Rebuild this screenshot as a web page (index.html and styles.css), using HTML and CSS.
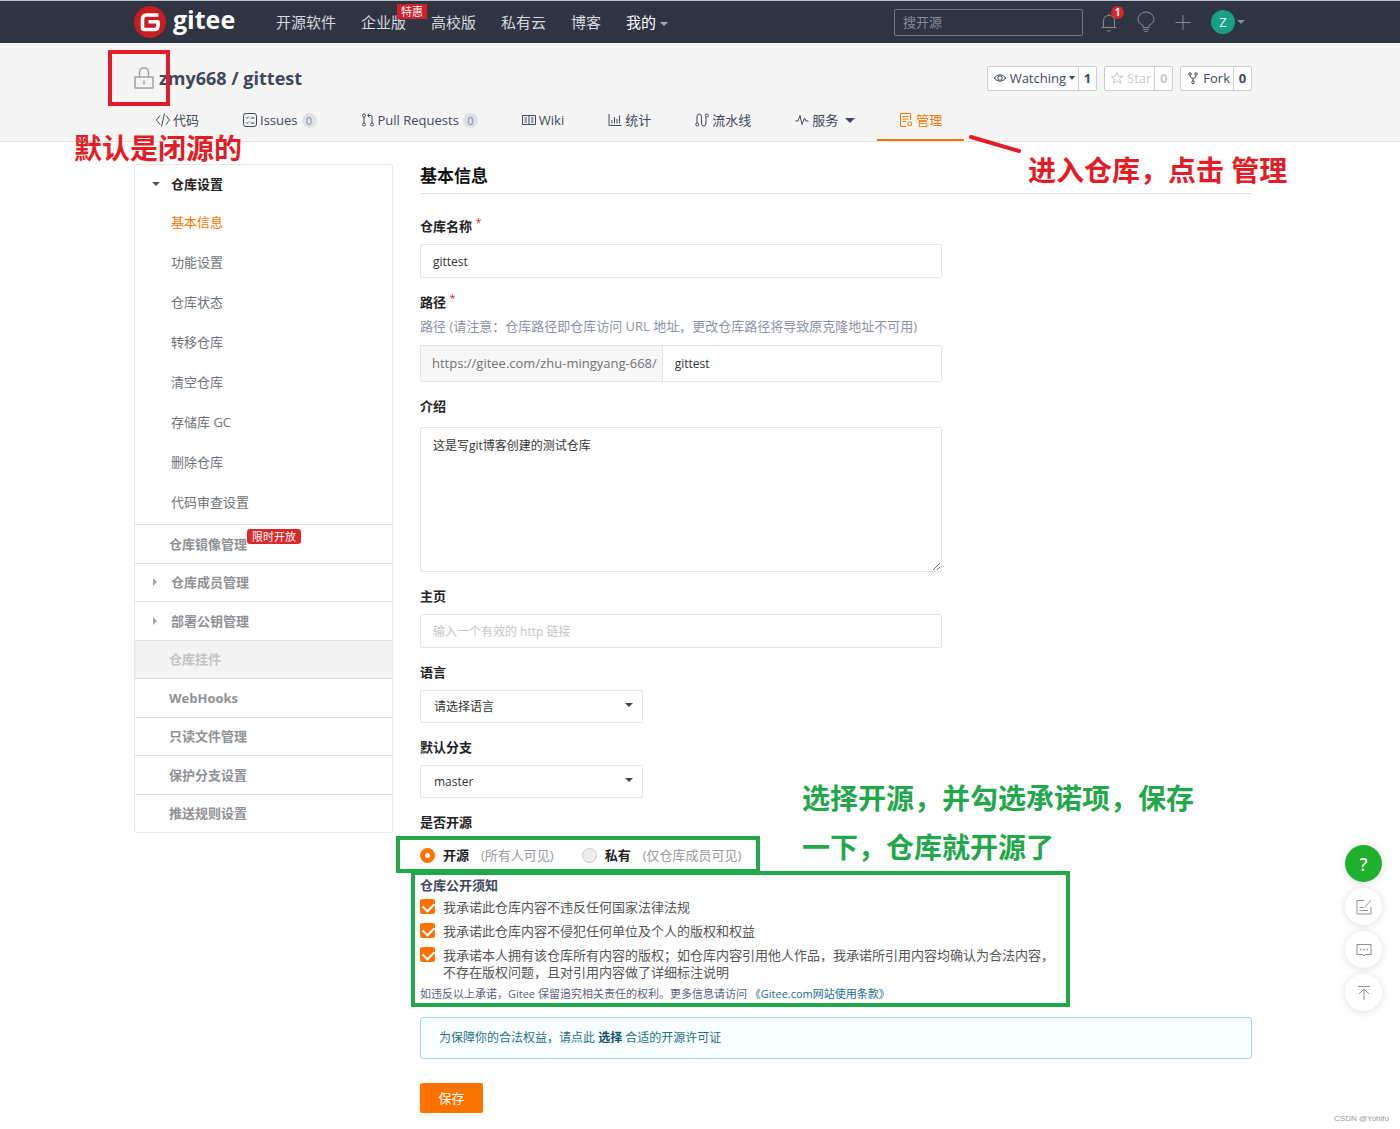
FILE: index.html
```html
<!DOCTYPE html>
<html lang="zh-CN">
<head>
<meta charset="utf-8">
<title>基本信息 - zmy668/gittest - Gitee</title>
<link rel="stylesheet" href="styles.css">
</head>
<body>
<header class="topbar">
  <div class="container topbar-inner">
    <a class="brand" href="#">
      <svg class="brand-mark" viewBox="0 0 32 32" aria-hidden="true"><circle cx="16" cy="16" r="16" fill="#c71d23"/><path d="M24.500 9H12.500Q8.500 9 8.500 13V21.500Q8.500 23.500 10.500 23.500H20.500Q24 23.500 24 20V15.800H14.500" fill="none" stroke="#fff" stroke-width="3.600" stroke-linejoin="round"/></svg>
      <span class="brand-name">gitee</span>
    </a>
    <nav class="topnav">
      <a href="#">开源软件</a>
      <a href="#" class="has-tag">企业版<span class="tag">特惠</span></a>
      <a href="#">高校版</a>
      <a href="#">私有云</a>
      <a href="#">博客</a>
      <a href="#" class="mine">我的<i class="caret"></i></a>
    </nav>
    <input class="search" type="search" placeholder="搜开源" aria-label="搜开源">
    <div class="tools">
      <a href="#" class="tool" aria-label="通知"><svg viewBox="0 0 18 22"><path d="M1.500 16.500H16.500M3.500 16.500V10Q3.500 4.500 9 4.500T14.500 10V16.500M9 4.500V2.500M7 19.500Q9 21 11 19.500"/></svg><span class="badge">1</span></a>
      <a href="#" class="tool" aria-label="动态"><svg viewBox="0 0 18 22"><path d="M6 16.500V14.500Q1 12 1 8.500A8 7.500 0 0 1 17 8.500Q17 12 12 14.500V16.500ZM6 18.500H12M7.500 20.500H10.500"/></svg></a>
      <a href="#" class="tool" aria-label="新建"><svg viewBox="0 0 18 22"><path d="M1.500 11.500H16.500M9 4V19"/></svg></a>
      <a href="#" class="me"><span class="avatar">Z</span><i class="caret"></i></a>
    </div>
  </div>
</header>

<section class="repo-head">
  <div class="container">
    <div class="repo-row">
      <div class="repo-title">
        <svg class="lock" viewBox="0 0 20 22" aria-hidden="true"><path d="M1 10H19V21H1ZM5.500 10V5.500Q5.500 1 10 1T14.500 5.500V10M10 13.500V17.500"/></svg>
        <a href="#">zmy668 / gittest</a>
        <span class="frame frame-lock"></span>
      </div>
      <div class="actions">
        <div class="action"><button type="button"><svg viewBox="0 0 14 14"><path d="M1 7Q7 .500 13 7Q7 13.500 1 7Z"/><circle cx="7" cy="7" r="2.200"/></svg>Watching<i class="caret"></i></button><a href="#">1</a></div>
        <div class="action off"><button type="button"><svg viewBox="0 0 14 14"><path d="M7 1.500L8.600 5.200L12.700 5.500L9.600 8.200L10.600 12.200L7 10L3.400 12.200L4.400 8.200L1.300 5.500L5.400 5.200Z"/></svg>Star</button><a href="#">0</a></div>
        <div class="action"><button type="button"><svg viewBox="0 0 14 14"><path d="M4 4.500Q4 7 7 7.500Q10 7 10 4.500M7 7.500V10"/><circle cx="4" cy="3" r="1.300"/><circle cx="10" cy="3" r="1.300"/><circle cx="7" cy="11.300" r="1.300"/></svg>Fork</button><a href="#">0</a></div>
      </div>
    </div>
    <nav class="tabs">
      <a href="#"><svg viewBox="0 0 14 14"><path d="M4 2.500L.500 7L4 11.500M10 2.500L13.500 7L10 11.500M8.500 .500L5.500 13.500"/></svg>代码</a>
      <a href="#"><svg viewBox="0 0 14 14"><rect x=".500" y=".500" width="13" height="13" rx="2.500"/><path d="M3 4.500L4 5.500L6 3.500M3 9.500L4 10.500L6 8.500M7.500 5H11.500M7.500 10H11.500"/></svg>Issues<span class="count">0</span></a>
      <a href="#"><svg viewBox="0 0 14 14"><circle cx="3" cy="2.500" r="1.500"/><circle cx="3" cy="11.500" r="1.500"/><circle cx="11" cy="11.500" r="1.500"/><path d="M3 4V10M11 10V3.500Q11 2.500 10 2.500H7M8.500 .500L6.500 2.500L8.500 4.500"/></svg>Pull Requests<span class="count">0</span></a>
      <a href="#"><svg viewBox="0 0 14 14"><path d="M.500 2.500H13.500V11.500H.500ZM7 2.500V11.500M2.500 5H5M2.500 7H5M2.500 9H5M9 5H11.500M9 7H11.500M9 9H11.500"/></svg>Wiki</a>
      <a href="#"><svg viewBox="0 0 14 14"><path d="M1 1V12.500H13.500M4 10.500V7M6.500 10.500V4M9 10.500V6M11.500 10.500V2.500"/></svg>统计</a>
      <a href="#"><svg viewBox="0 0 14 14"><circle cx="2.200" cy="11.500" r="1.500"/><circle cx="11.800" cy="2.500" r="1.500"/><path d="M2 10V4Q2 1 4.200 1T6.500 4V10Q6.500 13 8.700 13T11 10V4"/></svg>流水线</a>
      <a href="#"><svg viewBox="0 0 14 14"><path d="M.500 8H3L5 2.500L7 11.500L9.500 5L11 8H13.500"/></svg>服务<i class="caret"></i></a>
      <a href="#" class="active"><svg viewBox="0 0 14 14"><path d="M7 13.500H1.500V.500H11.500V7M3.500 3.500H9.500M3.500 6H9.500M3.500 8.500H7"/><circle cx="10.800" cy="10.800" r="2"/></svg>管理</a>
    </nav>
    <p class="note note-private">默认是闭源的</p>
    <svg class="note-line" viewBox="0 0 52 18" aria-hidden="true"><path d="M2 2L50 16" stroke="#e31c25" stroke-width="4" stroke-linecap="round"/></svg>
    <p class="note note-manage">进入仓库，点击 管理</p>
  </div>
</section>

<div class="container body">
  <aside class="side">
    <a href="#" class="side-head"><i class="caret"></i>仓库设置</a>
    <nav class="side-sub">
      <a href="#" class="current">基本信息</a>
      <a href="#">功能设置</a>
      <a href="#">仓库状态</a>
      <a href="#">转移仓库</a>
      <a href="#">清空仓库</a>
      <a href="#">存储库 GC</a>
      <a href="#">删除仓库</a>
      <a href="#">代码审查设置</a>
    </nav>
    <nav class="side-groups">
      <a href="#"><span class="has-tag">仓库镜像管理<span class="tag tag-open">限时开放</span></span></a>
      <a href="#" class="fold"><i class="caret-right"></i>仓库成员管理</a>
      <a href="#" class="fold"><i class="caret-right"></i>部署公钥管理</a>
      <a href="#" class="disabled">仓库挂件</a>
      <a href="#">WebHooks</a>
      <a href="#">只读文件管理</a>
      <a href="#">保护分支设置</a>
      <a href="#">推送规则设置</a>
    </nav>
  </aside>

  <main class="main">
    <h1>基本信息</h1>
    <form>
      <div class="field">
        <label for="name">仓库名称 <sup>*</sup></label>
        <input id="name" type="text" value="gittest">
      </div>
      <div class="field">
        <label for="path">路径 <sup>*</sup></label>
        <p class="hint">路径 (请注意：仓库路径即仓库访问 URL 地址，更改仓库路径将导致原克隆地址不可用)</p>
        <div class="path"><span>https://gitee.com/zhu-mingyang-668/</span><input id="path" type="text" value="gittest"></div>
      </div>
      <div class="field field-text">
        <label for="desc">介绍</label>
        <textarea id="desc">这是写git博客创建的测试仓库</textarea>
      </div>
      <div class="field">
        <label for="home">主页</label>
        <input id="home" type="text" placeholder="输入一个有效的 http 链接">
      </div>
      <div class="field">
        <label for="lang">语言</label>
        <div class="select"><select id="lang"><option>请选择语言</option></select></div>
      </div>
      <div class="field">
        <label for="branch">默认分支</label>
        <div class="select"><select id="branch"><option>master</option></select></div>
      </div>
      <fieldset class="visibility">
        <legend>是否开源</legend>
        <div class="radios">
          <label><input type="radio" name="open" checked><b>开源</b><span>(所有人可见)</span></label>
          <label><input type="radio" name="open"><b>私有</b><span>(仅仓库成员可见)</span></label>
          <span class="frame frame-radios"></span>
        </div>
      </fieldset>
      <div class="terms">
        <h2>仓库公开须知</h2>
        <label><input type="checkbox" checked><span>我承诺此仓库内容不违反任何国家法律法规</span></label>
        <label><input type="checkbox" checked><span>我承诺此仓库内容不侵犯任何单位及个人的版权和权益</span></label>
        <label><input type="checkbox" checked><span>我承诺本人拥有该仓库所有内容的版权；如仓库内容引用他人作品，我承诺所引用内容均确认为合法内容，不存在版权问题，且对引用内容做了详细标注说明</span></label>
        <p class="fine">如违反以上承诺，Gitee 保留追究相关责任的权利。更多信息请访问 <a href="#">《Gitee.com网站使用条款》</a></p>
        <span class="frame frame-terms"></span>
        <p class="note note-open">选择开源，并勾选承诺项，保存<br>一下，仓库就开源了</p>
      </div>
      <p class="license">为保障你的合法权益，请点此 <a href="#">选择</a> 合适的开源许可证</p>
      <button class="save" type="submit">保存</button>
    </form>
  </main>
</div>

<div class="float">
  <button type="button" class="help" aria-label="帮助">?</button>
  <button type="button" aria-label="反馈"><svg viewBox="0 0 16 16"><path d="M8 1.500H1V15H15V8M15 1L9 8M3.500 8.500H7.500M3.500 11.500H12"/></svg></button>
  <button type="button" aria-label="消息"><svg viewBox="0 0 16 16"><path d="M1 2.500H15V12.500H9.500L8 14L6.500 12.500H1Z"/><path d="M4 7.500H5.500M7.250 7.500H8.750M10.500 7.500H12" stroke-width="1.500"/></svg></button>
  <button type="button" aria-label="回到顶部"><svg viewBox="0 0 16 16"><path d="M2 1.500H14M8 15V4.500M3 9L8 4L13 9"/></svg></button>
</div>
<span class="watermark">CSDN @Yohifo</span>
</body>
</html>
```
FILE: styles.css
```css
* { box-sizing: border-box; }

body {
  margin: 0;
  position: relative;
  background: #fff;
  color: #40485b;
  font: 13px/20px "Open Sans", "Noto Sans CJK SC", sans-serif;
}

a { color: inherit; text-decoration: none; }
p, h1, h2 { margin: 0; }
input, textarea, select, button { font: inherit; color: inherit; margin: 0; }
button { cursor: pointer; }
svg { fill: none; stroke: currentColor; stroke-width: 1; flex: none; }

.container {
  position: relative;
  width: calc(100% - 40px);
  max-width: 1118px;
  margin: 0 auto;
}
.topbar, .repo-head, .body { padding-right: 14px; }
.container.body { max-width: 1132px; }

.caret {
  display: inline-block;
  border: 4px solid transparent;
  border-top-color: currentColor;
  border-bottom: 0;
}

/* top bar */
.topbar {
  border-top: 1px solid #b8c4d0;
  background: #2f3542;
  color: #d5d8de;
}
.topbar-inner { display: flex; align-items: center; height: 42px; padding-right: 7px; }
.brand { display: flex; align-items: center; gap: 7px; width: 142px; color: #fff; }
.brand-mark { width: 32px; height: 32px; stroke: none; }
.brand-name { font-size: 25px; line-height: 32px; font-weight: 700; padding-bottom: 6px; }
.topnav { display: flex; gap: 25px; font-size: 15px; }
.topnav a { white-space: nowrap; }
.topnav .mine { color: #fff; }
.mine .caret { margin-left: 4px; vertical-align: 2px; color: #a9aeb8; }
.has-tag { position: relative; }
.tag {
  position: absolute;
  left: 36px;
  top: -8px;
  padding: 0 4px;
  background: #d0202a;
  color: #fff;
  font-size: 11px;
  line-height: 15px;
  white-space: nowrap;
}
.search {
  width: 189px;
  height: 27px;
  margin-left: auto;
  padding: 0 8px;
  border: 1px solid #727885;
  border-radius: 2px;
  background: transparent;
}
.search::placeholder { color: #868c98; }
.tools { display: flex; align-items: center; gap: 19px; margin-left: 17px; color: #858c99; }
.tool { position: relative; height: 22px; }
.tool svg { width: 18px; height: 22px; }
.badge {
  position: absolute;
  left: 11px;
  top: -5px;
  width: 13px;
  height: 13px;
  border-radius: 50%;
  background: #d9262c;
  color: #fff;
  font-size: 10px;
  line-height: 13px;
  font-weight: 700;
  text-align: center;
}
.me { display: flex; align-items: center; gap: 2px; }
.avatar {
  width: 24px;
  height: 24px;
  border-radius: 50%;
  background: #19a184;
  color: #fff;
  line-height: 24px;
  text-align: center;
}

/* repository header */
.repo-head { background: #f5f5f5; border-bottom: 1px solid #e3e3e3; }
.repo-row { display: flex; align-items: center; justify-content: space-between; height: 58px; padding-top: 12px; }
.repo-title { position: relative; display: flex; align-items: center; gap: 5px; font-size: 18px; font-weight: 700; }
.lock { width: 20px; height: 22px; color: #a0a3a8; stroke-width: 1.5; }
.actions { display: flex; gap: 7px; }
.action {
  display: flex;
  height: 25px;
  border: 1px solid #c9ccd0;
  border-radius: 2px;
  background: #fff;
  line-height: 23px;
}
.action button { display: flex; align-items: center; gap: 3px; padding: 0 3px 0 5px; border: 0; background: none; }
.action svg { width: 14px; height: 14px; }
.action .caret { border-width: 4px 3px 0; }
.action > a { width: 18px; border-left: 1px solid #c9ccd0; font-weight: 700; text-align: center; }
.action.off { color: #c5c7cb; }

.tabs { display: flex; height: 40px; }
.tabs a {
  display: flex;
  align-items: center;
  gap: 3px;
  padding: 0 22px;
  border-bottom: 2px solid transparent;
  white-space: nowrap;
}
.tabs svg { width: 14px; height: 14px; }
.tabs .caret { margin-left: 4px; border-width: 5px 5px 0; }
.tabs .active { color: #fe7300; border-color: #fe7300; }
.count {
  width: 15px;
  margin-left: 1px;
  border-radius: 8px;
  background: #e0e1e6;
  color: #7c87a5;
  font-size: 11px;
  line-height: 15px;
  text-align: center;
}

/* hand-drawn annotations that lie over the page */
.note { position: absolute; color: #e31c25; font-size: 28px; line-height: 40px; font-weight: 700; white-space: nowrap; z-index: 2; }
.note-private { left: -60px; top: 85px; }
.note-manage { left: 894px; top: 107px; }
.note-line { position: absolute; left: 835px; top: 92px; width: 52px; height: 18px; z-index: 2; }
.note-open { left: 382px; top: -102px; color: #22a84b; line-height: 49px; }
.frame { position: absolute; border: 4px solid #22a84b; pointer-events: none; z-index: 1; }
.frame-lock { left: -26px; top: -17px; width: 62px; height: 56px; border-color: #e31c25; }
.frame-radios { left: -24px; top: -9px; width: 364px; height: 37px; }
.frame-terms { left: -9px; top: -5px; width: 659px; height: 136px; }

/* page body */
.body { display: flex; align-items: flex-start; gap: 27px; padding-bottom: 16px; }

.side { flex: none; width: 259px; margin-top: 22px; border: 1px solid #e8e8e8; border-radius: 3px; color: #6f7276; }
.side a { display: flex; align-items: center; }
.side-head { height: 37px; padding-left: 17px; gap: 11px; color: #222; font-weight: 700; }
.side-head .caret { color: #555; }
.side-sub { padding-bottom: 2px; }
.side-sub a { height: 40px; padding-left: 36px; }
.side-sub .current { color: #fe7300; }
.side-groups { display: grid; grid-auto-rows: 1fr; height: 308px; color: #8f9194; font-weight: 700; }
.side-groups > a { padding-left: 34px; border-top: 1px solid #dedede; }
.side-groups .fold { padding-left: 18px; gap: 14px; }
.caret-right { border: 4px solid transparent; border-left-color: #a5a5a5; border-right: 0; }
.side-groups .disabled { background: #f3f3f3; color: #c2c4c6; }
.tag-open { left: 78px; top: -5px; padding: 0 5px; border-radius: 3px; background: #db2828; font-weight: 400; }

.main { flex: 1; min-width: 0; color: #333; }
.main h1 { padding: 22px 0 5px; border-bottom: 1px solid #e3e3e3; color: #111; font-size: 17px; line-height: 24px; }
.main form { padding-top: 22px; }
.field { max-width: 522px; margin-bottom: 14px; }
.field > label, .visibility legend { display: block; padding: 0; margin-bottom: 8px; color: #222; font-weight: 700; }
.field-text > label { margin-bottom: 11px; }
.field sup { color: #db2828; font-weight: 400; line-height: 0; }
.field input, .field textarea, .field select {
  display: block;
  width: 100%;
  height: 34px;
  padding: 0 12px;
  border: 1px solid #e3e4e5;
  border-radius: 2px;
  background: #fff;
  font-size: 12px;
}
.field textarea { height: 145px; padding: 8px 12px; resize: vertical; line-height: 20px; }
.field input::placeholder { color: #c3c5c8; }
.field .hint { margin: -4px 0 9px; color: #8c92a4; white-space: nowrap; }
.path { display: flex; height: 37px; }
.path span { flex: none; padding: 0 5px 0 11px; border: 1px solid #e3e4e5; border-right: 0; border-radius: 2px 0 0 2px; background: #f7f7f7; color: #707275; line-height: 35px; }
.path input { flex: 1; min-width: 0; height: 37px; border-radius: 0 2px 2px 0; }
.select { position: relative; width: 223px; }
.field select { appearance: none; padding: 0 13px; height: 33px; }
.select::after { content: ""; position: absolute; right: 10px; top: 13px; border: 4px solid transparent; border-top-color: #444; border-bottom: 0; }

.visibility { border: 0; margin: 0; padding: 0; }
.radios { position: relative; display: flex; gap: 28px; margin-top: 5px; }
.radios label { display: flex; align-items: center; white-space: nowrap; }
.radios b { margin: 0 12px 0 8px; color: #222; }
.radios span { color: #96999e; }
.radios input { appearance: none; width: 15px; height: 15px; border: 1px solid #c8c8c8; border-radius: 50%; background: #eee; }
.radios input:checked { border: 5px solid #fe7300; background: #fff; }

.terms { position: relative; width: 636px; max-width: 100%; margin-top: 11px; color: #555; }
.terms h2 { color: #40485b; font-size: 13px; line-height: 18px; }
.terms label { display: flex; gap: 8px; margin-top: 7px; line-height: 17px; }
.terms h2 + label { margin-top: 5px; }
.terms input { appearance: none; position: relative; flex: none; width: 15px; height: 15px; border-radius: 2px; background: #fe7300; }
.terms input::after { content: ""; position: absolute; left: 3px; top: 3px; width: 9px; height: 6px; border: solid #fff; border-width: 0 0 2px 2px; transform: rotate(-45deg); }
.fine { margin-top: 4px; color: #5a5f75; font-size: 11px; line-height: 18px; white-space: nowrap; }
.fine a { color: #1d6a8c; }

.license { margin-top: 14px; padding: 10px 18px; border: 1px solid #a9d5de; border-radius: 3px; background: #f8ffff; color: #276f86; font-size: 12px; }
.license a { color: #0f4e6b; font-weight: 700; }
.save { display: block; width: 63px; height: 30px; margin-top: 24px; padding: 0; border: 0; border-radius: 2px; background: #fe7300; color: #fff; }

.float { position: fixed; right: 18px; bottom: 118px; display: flex; flex-direction: column; gap: 6px; }
.float button {
  display: grid;
  place-items: center;
  width: 37px;
  height: 37px;
  padding: 0;
  border: 0;
  border-radius: 50%;
  background: #fff;
  box-shadow: 0 1px 8px rgba(0, 0, 0, .14);
  color: #8c92a4;
}
.float svg { width: 16px; height: 16px; }
.float .help { background: #1fb02e; color: #fff; font-size: 18px; font-weight: 600; }
.watermark { position: absolute; right: 11px; bottom: 4px; color: #999; font: 8px/12px "Liberation Sans", sans-serif; }
```
